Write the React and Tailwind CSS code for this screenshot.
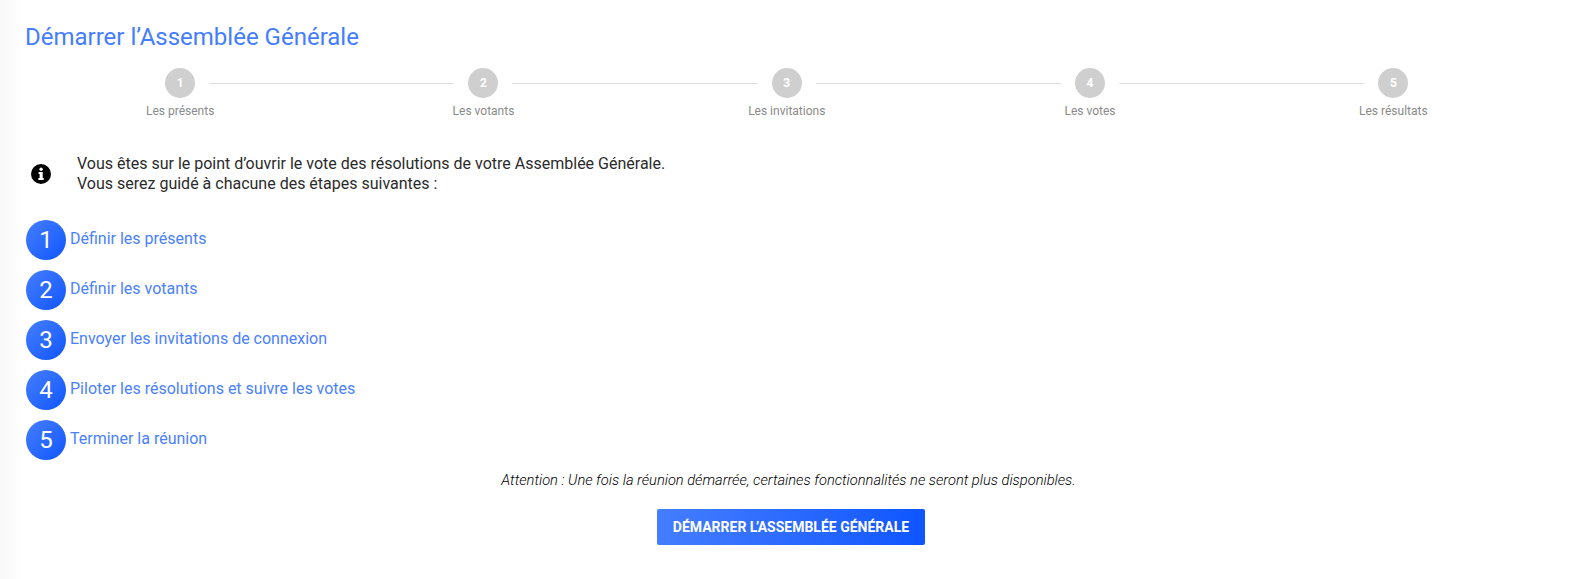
const etapes = ["Les présents", "Les votants", "Les invitations", "Les votes", "Les résultats"];
const liste = [
  "Définir les présents",
  "Définir les votants",
  "Envoyer les invitations de connexion",
  "Piloter les résolutions et suivre les votes",
  "Terminer la réunion",
];

function InfoIcon() {
  return (
    <svg viewBox="0 0 20 20" className="ml-[6px] h-5 w-5 shrink-0">
      <circle cx="10" cy="10" r="10" fill="#000" />
      <circle cx="10.1" cy="5.2" r="1.7" fill="#fff" />
      <path d="M7.6 8h4.1v6h1v2H7.4v-2h1.2v-4h-1z" fill="#fff" />
    </svg>
  );
}

export default function App() {
  return (
    <div className="h-[579px] overflow-hidden bg-[linear-gradient(to_right,#f8f8f8,#ffffff_26px)] pl-[25px] pr-[28px] pt-[23px] font-['Roboto',sans-serif]">
      <h1 className="text-2xl leading-[28px] text-[#447dff]">Démarrer l’Assemblée Générale</h1>

      {/* Stepper */}
      <div className="mt-[17px] ml-[3.5px] flex">
        {etapes.map((label, i) => (
          <div key={label} className="relative flex flex-1 flex-col items-center">
            {i > 0 && (
              <div className="absolute top-[15px] right-[calc(50%+29px)] left-[calc(-50%+29px)] border-t border-[#dddddd]" />
            )}
            <div className="flex h-[30px] w-[30px] items-center justify-center rounded-full bg-[#cfcfcf] text-xs font-bold text-white">
              {i + 1}
            </div>
            <div className="mt-[5px] text-xs leading-[16px] text-[#8a8a8a]">{label}</div>
          </div>
        ))}
      </div>

      {/* Info */}
      <div className="mt-[35px] flex items-center">
        <InfoIcon />
        <p className="ml-[26px] text-base leading-[20px] text-[#2b2b2b]">
          Vous êtes sur le point d’ouvrir le vote des résolutions de votre Assemblée Générale.
          <br />
          Vous serez guidé à chacune des étapes suivantes :
        </p>
      </div>

      {/* Liste des étapes */}
      <ul className="mt-[26px] ml-[1px] flex flex-col gap-[10px]">
        {liste.map((texte, i) => (
          <li key={texte} className="flex items-center">
            <span className="flex h-10 w-10 items-center justify-center rounded-full bg-gradient-to-br from-[#447dff] to-[#0d55ff] text-2xl text-white">
              {i + 1}
            </span>
            <span className="ml-[4px] -translate-y-[1px] text-base text-[#4a81ff]">{texte}</span>
          </li>
        ))}
      </ul>

      <div className="flex flex-col items-center pl-[7px]">
        <p className="mt-[10px] text-[14.67px] italic leading-[20px] font-light text-black">
          Attention : Une fois la réunion démarrée, certaines fonctionnalités ne seront plus disponibles.
        </p>
        <button className="mt-[19px] ml-[5px] h-[36px] w-[268px] rounded-[2px] bg-gradient-to-r from-[#447dff] to-[#0d55ff] text-sm font-bold text-white">
          DÉMARRER <span className="tracking-[-1.5px]">L’</span>ASSEMBLÉE GÉNÉRALE
        </button>
      </div>
    </div>
  );
}
